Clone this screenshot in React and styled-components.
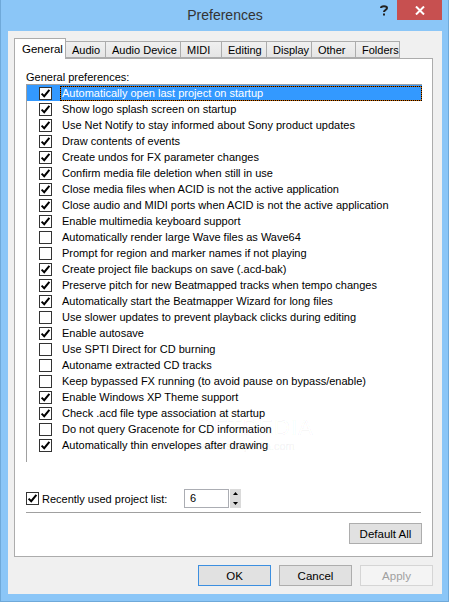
import React from 'react'
import styled, { createGlobalStyle } from 'styled-components'

const GlobalStyle = createGlobalStyle`
  html, body {
    margin: 0;
    padding: 0;
    background: #8bc6f7;
  }
  body {
    font-family: 'Liberation Sans', Arial, sans-serif;
    font-size: 11px;
    color: #000;
  }
`

const Window = styled.div`
  width: 449px;
  height: 602px;
  box-sizing: border-box;
  background: #8bc6f7;
  border-left: 1px solid #6fa9d9;
  border-right: 1px solid #6fa9d9;
  border-bottom: 1px solid #6fa9d9;
  padding: 0 6px 7px 7px;
  display: flex;
  flex-direction: column;
`

const TitleBar = styled.div`
  height: 31px;
  display: grid;
  grid-template-columns: 1fr auto 1fr;
  align-items: start;
`

const Title = styled.div`
  grid-column: 2;
  font-size: 14px;
  line-height: 31px;
  color: #333;
`

const Caption = styled.div`
  grid-column: 3;
  justify-self: end;
  display: flex;
`

const CaptionButton = styled.div`
  width: ${(p) => p.$w}px;
  height: 20px;
  display: flex;
  align-items: center;
  justify-content: center;
  background: ${(p) => (p.$close ? '#c75050' : 'transparent')};
`

const Client = styled.div`
  flex: 1;
  background: #f0f0f0;
  padding: 7px 9px 8px 6px;
  display: flex;
  flex-direction: column;
`

const TabStrip = styled.div`
  height: 20px;
  display: flex;
  align-items: flex-end;
  position: relative;
  z-index: 1;
`

const Tab = styled.div`
  width: ${(p) => p.$w}px;
  height: ${(p) => (p.$active ? 21 : 17)}px;
  margin-bottom: ${(p) => (p.$active ? -1 : 0)}px;
  margin-left: -1px;
  box-sizing: border-box;
  border: 1px solid #acacac;
  border-bottom: ${(p) => (p.$active ? 'none' : '1px solid #acacac')};
  background: ${(p) =>
    p.$active ? '#fff' : 'linear-gradient(#f0f0f0, #e5e5e5)'};
  display: flex;
  align-items: ${(p) => (p.$active ? 'flex-start' : 'center')};
  padding: ${(p) => (p.$active ? '3px 0 0 7px' : '0 0 0 6px')};
  line-height: 14px;
  font-size: ${(p) => (p.$active ? '11.5px' : '11px')};
  &:first-child {
    margin-left: 0;
  }
`

const Panel = styled.div`
  flex: 1;
  background: #fff;
  border: 1px solid #acacac;
  padding: 11px 10px 12px 11px;
  display: flex;
  flex-direction: column;
`

const GroupLabel = styled.div`
  line-height: 14px;
  height: 14px;
`

const List = styled.div`
  position: relative;
  height: 378px;
  width: 396px;
  box-sizing: border-box;
  border-top: 1px solid #a0a0a0;
  border-left: 1px solid #a0a0a0;
  overflow: hidden;
`

const Row = styled.div`
  height: 16px;
  display: flex;
  align-items: center;
  padding-left: 12px;
  background: ${(p) => (p.$selected ? '#3399ff' : 'transparent')};
  color: ${(p) => (p.$selected ? '#fff' : '#000')};
`

const RowText = styled.span`
  flex: 1;
  margin-left: 8px;
  height: 15px;
  line-height: 13px;
  padding-left: 1px;
  box-sizing: border-box;
  white-space: nowrap;
  border: 1px solid ${(p) => (p.$focus ? '#cc6600' : 'transparent')};
  outline: ${(p) => (p.$focus ? '1px dotted #000' : 'none')};
  outline-offset: -1px;
`

const Box = styled.span`
  width: 13px;
  height: 13px;
  flex: none;
  box-sizing: border-box;
  border: 1px solid #333;
  background: #fff;
  display: flex;
  align-items: center;
  justify-content: center;
`

const Watermark = styled.div`
  position: absolute;
  left: ${(p) => p.$x}px;
  top: ${(p) => p.$y}px;
  font-size: ${(p) => p.$size}px;
  letter-spacing: ${(p) => p.$spacing}px;
  color: transparent;
  -webkit-text-stroke: 0.6px rgba(0, 0, 0, 0.06);
  pointer-events: none;
  white-space: nowrap;
`

const RecentRow = styled.div`
  margin-top: 27px;
  height: 19px;
  display: flex;
  align-items: center;
`

const RecentLabel = styled.span`
  margin-left: 3px;
  width: 142px;
`

const Spin = styled.div`
  display: flex;
  height: 19px;
`

const SpinInput = styled.div`
  width: 45px;
  box-sizing: border-box;
  border: 1px solid #abadb3;
  background: #fff;
  padding-left: 5px;
  line-height: 17px;
`

const SpinButtons = styled.div`
  width: 11px;
  margin-left: 1px;
  background: #dadada;
  display: flex;
  flex-direction: column;
  align-items: center;
  justify-content: space-around;
`

const Separator = styled.div`
  margin-top: 4px;
  height: 1px;
  width: 395px;
  background: #a0a0a0;
`

const Button = styled.div`
  width: 73px;
  height: 21px;
  box-sizing: border-box;
  border: 1px solid
    ${(p) => (p.$default ? '#3c8fe0' : p.$disabled ? '#d5d5d5' : '#adadad')};
  background: ${(p) => (p.$disabled ? '#f4f4f4' : '#e1e1e1')};
  color: ${(p) => (p.$disabled ? '#a0a0a0' : '#000')};
  display: flex;
  align-items: center;
  justify-content: center;
  font-size: 11.5px;
`

const DefaultRow = styled.div`
  margin-top: 10px;
  display: flex;
  justify-content: flex-end;
`

const Footer = styled.div`
  margin-top: 8px;
  display: flex;
  justify-content: flex-end;
  gap: 8px;
`

const Check = () => (
  <svg width="11" height="11" viewBox="0 0 11 11">
    <path
      d="M1.6 5.6 L4.2 8.2 L9.4 1.8"
      fill="none"
      stroke="#000"
      strokeWidth="2"
    />
  </svg>
)

const CheckBox = ({ checked }) => <Box>{checked && <Check />}</Box>

const tabs = [
  ['General', 52],
  ['Audio', 41],
  ['Audio Device', 76],
  ['MIDI', 42],
  ['Editing', 46],
  ['Display', 46],
  ['Other', 45],
  ['Folders', 45],
]

const prefs = [
  [true, 'Automatically open last project on startup'],
  [true, 'Show logo splash screen on startup'],
  [true, 'Use Net Notify to stay informed about Sony product updates'],
  [true, 'Draw contents of events'],
  [true, 'Create undos for FX parameter changes'],
  [true, 'Confirm media file deletion when still in use'],
  [true, 'Close media files when ACID is not the active application'],
  [true, 'Close audio and MIDI ports when ACID is not the active application'],
  [true, 'Enable multimedia keyboard support'],
  [false, 'Automatically render large Wave files as Wave64'],
  [false, 'Prompt for region and marker names if not playing'],
  [true, 'Create project file backups on save (.acd-bak)'],
  [true, 'Preserve pitch for new Beatmapped tracks when tempo changes'],
  [true, 'Automatically start the Beatmapper Wizard for long files'],
  [false, 'Use slower updates to prevent playback clicks during editing'],
  [true, 'Enable autosave'],
  [false, 'Use SPTI Direct for CD burning'],
  [false, 'Autoname extracted CD tracks'],
  [false, 'Keep bypassed FX running (to avoid pause on bypass/enable)'],
  [true, 'Enable Windows XP Theme support'],
  [true, 'Check .acd file type association at startup'],
  [false, 'Do not query Gracenote for CD information'],
  [true, 'Automatically thin envelopes after drawing'],
]

const App = () => {
  return (
    <>
      <GlobalStyle />
      <Window>
        <TitleBar>
          <Title>Preferences</Title>
          <Caption>
            <CaptionButton $w={26}>
              <svg width="8" height="11" viewBox="0 0 8 11">
                <path
                  d="M1 3 C1 0.8 7 0.8 7 3 C7 5 4 5 4 7"
                  fill="none"
                  stroke="#222"
                  strokeWidth="2"
                />
                <rect x="3" y="8.5" width="2" height="2" fill="#222" />
              </svg>
            </CaptionButton>
            <CaptionButton $w={45} $close>
              <svg width="10" height="9" viewBox="0 0 10 9">
                <path d="M1 0.5 L9 8.5 M9 0.5 L1 8.5" stroke="#fff" strokeWidth="2" />
              </svg>
            </CaptionButton>
          </Caption>
        </TitleBar>
        <Client>
          <TabStrip>
            {tabs.map(([name, w], i) => (
              <Tab key={name} $w={w} $active={i === 0}>
                {name}
              </Tab>
            ))}
          </TabStrip>
          <Panel>
            <GroupLabel>General preferences:</GroupLabel>
            <List>
              {prefs.map(([on, text], i) => (
                <Row key={text} $selected={i === 0}>
                  <CheckBox checked={on} />
                  <RowText $focus={i === 0}>{text}</RowText>
                </Row>
              ))}
              <Watermark $x={153} $y={330} $size={22} $spacing={1}>
                SOFTPEDIA
              </Watermark>
              <Watermark $x={173} $y={355} $size={11} $spacing={0}>
                www.softpedia.com
              </Watermark>
            </List>
            <RecentRow>
              <CheckBox checked />
              <RecentLabel>Recently used project list:</RecentLabel>
              <Spin>
                <SpinInput>6</SpinInput>
                <SpinButtons>
                  <svg width="5" height="3" viewBox="0 0 5 3">
                    <path d="M2.5 0 L5 3 L0 3 Z" fill="#000" />
                  </svg>
                  <svg width="5" height="3" viewBox="0 0 5 3">
                    <path d="M0 0 L5 0 L2.5 3 Z" fill="#000" />
                  </svg>
                </SpinButtons>
              </Spin>
            </RecentRow>
            <Separator />
            <DefaultRow>
              <Button>Default All</Button>
            </DefaultRow>
          </Panel>
          <Footer>
            <Button $default>OK</Button>
            <Button>Cancel</Button>
            <Button $disabled>Apply</Button>
          </Footer>
        </Client>
      </Window>
    </>
  )
}

export default App
